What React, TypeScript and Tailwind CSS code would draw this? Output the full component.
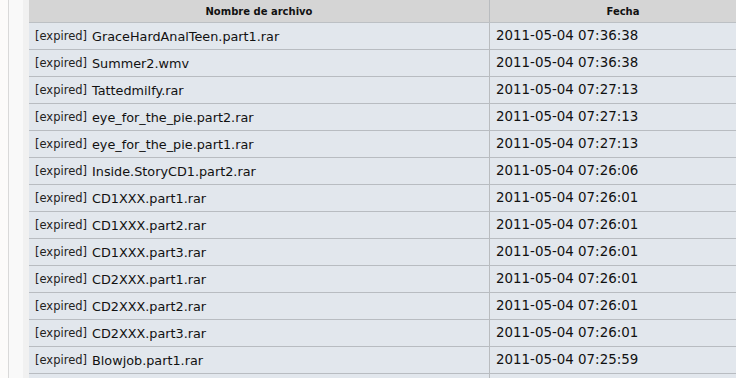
const rows = [
  ["GraceHardAnalTeen.part1.rar", "2011-05-04 07:36:38"],
  ["Summer2.wmv", "2011-05-04 07:36:38"],
  ["Tattedmilfy.rar", "2011-05-04 07:27:13"],
  ["eye_for_the_pie.part2.rar", "2011-05-04 07:27:13"],
  ["eye_for_the_pie.part1.rar", "2011-05-04 07:27:13"],
  ["Inside.StoryCD1.part2.rar", "2011-05-04 07:26:06"],
  ["CD1XXX.part1.rar", "2011-05-04 07:26:01"],
  ["CD1XXX.part2.rar", "2011-05-04 07:26:01"],
  ["CD1XXX.part3.rar", "2011-05-04 07:26:01"],
  ["CD2XXX.part1.rar", "2011-05-04 07:26:01"],
  ["CD2XXX.part2.rar", "2011-05-04 07:26:01"],
  ["CD2XXX.part3.rar", "2011-05-04 07:26:01"],
  ["Blowjob.part1.rar", "2011-05-04 07:25:59"],
  ["", ""],
];

const App = () => {
  return (
    <div className="w-[736px] h-[378px] overflow-hidden flex bg-[#fcfbfa] font-['DejaVu_Sans',Verdana,sans-serif] text-[#111]">
      {/* page margin */}
      <div className="w-2 shrink-0" />
      <div className="w-px shrink-0 bg-[#d9d9d9]" />
      <div className="w-[14px] shrink-0 bg-[#f9f9f9]" />
      <div className="w-[6px] shrink-0 bg-[#f1f1f1]" />

      {/* table */}
      <div className="w-[727px] shrink-0 flex flex-col">
        <div className="flex h-[23px] shrink-0 bg-[#d5d5d5] border-b border-[#bcc0c4] text-[10px] font-bold">
          <div className="w-[461px] shrink-0 flex items-center justify-center border-r border-[#b9bcbf]">
            Nombre de archivo
          </div>
          <div className="w-[266px] shrink-0 flex items-center justify-center">Fecha</div>
        </div>

        {rows.map(([name, date], i) => (
          <div key={i} className="flex h-[27px] shrink-0 bg-[#e2e7ed] border-b border-[#b8bcc1]">
            <div className="w-[461px] shrink-0 flex items-center pl-[6px] pt-[1px] border-r border-[#b9bcbf]">
              {name && (
                <>
                  <span className="text-[11.5px] text-[#222]">[expired]</span>
                  <span className="ml-[5px] text-[12.8px]">{name}</span>
                </>
              )}
            </div>
            <div className="flex-1 flex items-center pl-[6px] pt-[1px] text-[13.4px]">{date}</div>
          </div>
        ))}
      </div>
    </div>
  );
};

export default App;
